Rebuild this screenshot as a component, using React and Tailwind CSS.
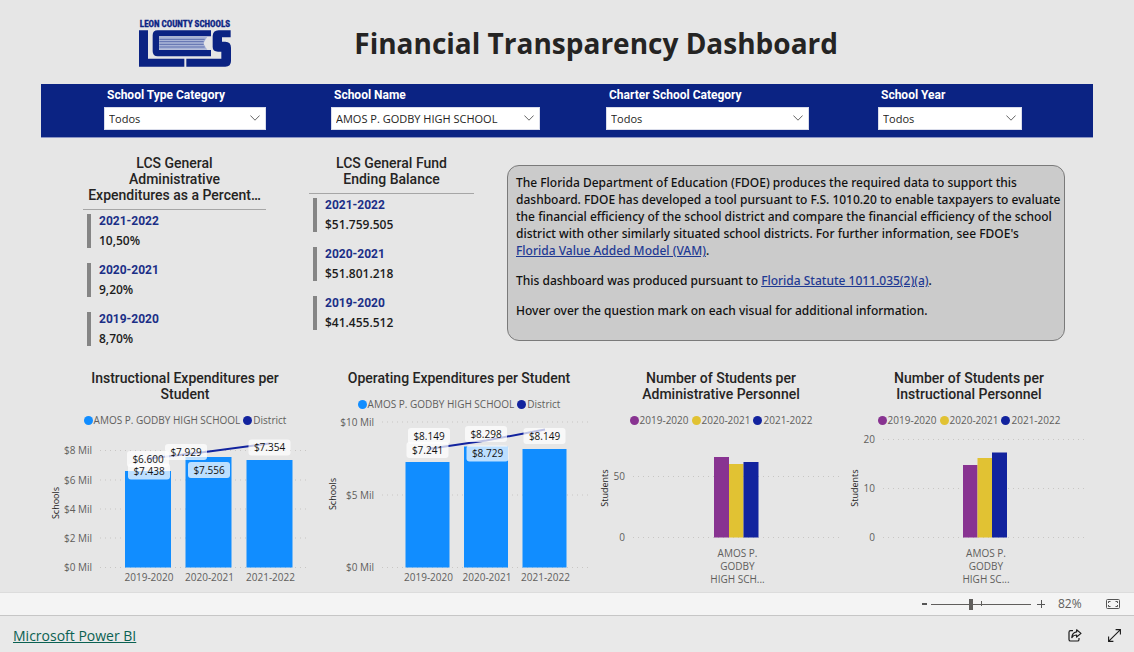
import React from "react";

const SANS = "font-['Open_Sans','Noto_Sans',sans-serif]";
const DIN = "font-['Roboto','Liberation_Sans',sans-serif]";

function Logo() {
  return (
    <svg viewBox="27 25 276 147" className="h-[49px] w-[92px] shrink-0" role="img" aria-label="Leon County Schools">
      <text x="165" y="52" textAnchor="middle" fontSize="27" fontWeight="700" fill="#0b2383" stroke="#0b2383" strokeWidth="1" className="font-['Liberation_Sans_Narrow','Roboto_Condensed','Liberation_Sans',sans-serif]">
        LEON COUNTY SCHOOLS
      </text>
      <g fill="#0b2383">
        <path d="M27 62H54V147H163V171H27Z" />
        <path d="M169 147H274V126H264Q248 126 248 112V80Q248 62 266 62H302V83H276V96H286Q303 96 303 114V154Q303 171 286 171H169Z" />
        <path d="M83 62H243V80H87V121H243V140H83Q68 140 68 125V77Q68 62 83 62Z" />
      </g>
      <path d="M87 81H232Q216 101 232 120H87Z" fill="#a9b4d6" />
      <g stroke="#5d6fae" strokeWidth="3">
        <path d="M88 89H224M88 96H221M88 104H221M88 112H224" />
      </g>
      <path d="M243 81Q200 101 243 120Z" fill="#e6e6e6" />
    </svg>
  );
}

function Filter({ id, label, value, width }) {
  return (
    <div>
      <label htmlFor={id} className={`block pl-[3px] text-[12px] leading-[16px] font-bold text-white ${DIN}`}>
        {label}
      </label>
      <div className={`relative mt-1 max-w-full ${width}`}>
        <select id={id} defaultValue={value} className="block h-[23px] w-full appearance-none border border-[#d9dcea] bg-white pt-px pr-6 pl-1 text-[11px] text-[#252423]">
          <option>{value}</option>
        </select>
        <svg viewBox="0 0 10 6" className="pointer-events-none absolute top-[8px] right-[6px] h-[6px] w-[10px]" fill="none" stroke="#555" strokeWidth="0.9">
          <path d="M0.4 0.5 5 5.2 9.6 0.5" />
        </svg>
      </div>
    </div>
  );
}

function Kpi({ title, items }) {
  return (
    <section>
      <div className="border-b border-[#a6a6a6] pb-[6px]">
        <h2 className={`text-center text-[14px] leading-[16px] font-medium text-[#252423] ${DIN}`}>
          {title.map((line) => (
            <span key={line} className="block whitespace-nowrap">{line}</span>
          ))}
        </h2>
      </div>
      <dl className="mt-1 ml-1 flex flex-col gap-[15px]">
        {items.map(([year, value]) => (
          <div key={year} className="h-[34px] border-l-4 border-[#858585] pl-2">
            <dt className={`text-[12px] leading-[15px] font-bold text-[#1b2f86] ${DIN}`}>{year}</dt>
            <dd className="mt-1 text-[12px] leading-[16px] font-semibold text-[#1c1c1c]">{value}</dd>
          </div>
        ))}
      </dl>
    </section>
  );
}

function ChartCard({ title, legend, children }) {
  return (
    <section className="flex flex-col">
      <h2 className={`text-center text-[14px] leading-[16px] font-medium text-[#252423] ${DIN}`}>
        {title.map((line) => (
          <span key={line} className="block">{line}</span>
        ))}
      </h2>
      <ul className="mt-[10px] flex h-4 items-center justify-center gap-[3px] text-[10px] text-[#605e5c]">
        {legend.map(([name, color]) => (
          <li key={name} className="flex items-center gap-px whitespace-nowrap">
            <span className={`size-[9px] rounded-full ${color}`} />
            {name}
          </li>
        ))}
      </ul>
      {children}
    </section>
  );
}

function Grid({ lines, from, to, tickX }) {
  return (
    <g>
      {lines.map(([label, y]) => (
        <g key={label}>
          <line x1={from} x2={to} y1={y} y2={y} stroke="#c8c6c4" strokeWidth="1" strokeDasharray="1 4" />
          <text x={tickX} y={y + 3.5} textAnchor="end" fontSize="10" fill="#605e5c">{label}</text>
        </g>
      ))}
    </g>
  );
}

function AxisTitle({ x, y, children }) {
  return (
    <text transform={`translate(${x} ${y}) rotate(-90)`} textAnchor="middle" fontSize="9" fill="#252423">
      {children}
    </text>
  );
}

function Tag({ x, y, children }) {
  return (
    <g>
      <rect x={x - 21} y={y - 8} width="42" height="16" rx="3" fill="#fff" fillOpacity="0.72" />
      <text x={x} y={y + 3.5} textAnchor="middle" fontSize="10" fill="#111">{children}</text>
    </g>
  );
}

function ComboChart({ width, height, lines, from, to, tickX, axis, bars, barWidth, base, points, tags }) {
  return (
    <svg viewBox={`0 0 ${width} ${height}`} className="block w-full">
      <AxisTitle x={axis[0]} y={axis[1]}>Schools</AxisTitle>
      <Grid lines={lines} from={from} to={to} tickX={tickX} />
      {bars.map(([year, x, top]) => (
        <g key={year}>
          <rect x={x} y={top} width={barWidth} height={base - top} fill="#118dff" />
          <text x={x + barWidth / 2 + 1} y={base + 13.5} textAnchor="middle" fontSize="10" fill="#605e5c">{year}</text>
        </g>
      ))}
      <polyline points={points} fill="none" stroke="#12239e" strokeWidth="2" strokeLinejoin="round" />
      {tags.map(([text, x, y]) => (
        <Tag key={`${text}-${x}`} x={x} y={y}>{text}</Tag>
      ))}
    </svg>
  );
}

function ClusterChart({ width, lines, from, to, axisX, bars, labelX, label }) {
  const fills = ["#883391", "#e1c233", "#12239e"];
  return (
    <svg viewBox={`0 0 ${width} 164`} className="block w-full">
      <AxisTitle x={axisX} y={60}>Students</AxisTitle>
      <Grid lines={lines} from={from} to={to} tickX={from - 8} />
      {bars.map(([x, top, w], i) => (
        <rect key={x} x={x} y={top} width={w} height={109.5 - top} fill={fills[i]} />
      ))}
      {label.map((line, i) => (
        <text key={line} x={labelX} y={129 + i * 13} textAnchor="middle" fontSize="10" fill="#605e5c">{line}</text>
      ))}
    </svg>
  );
}

const schoolLegend = [
  ["AMOS P. GODBY HIGH SCHOOL", "bg-[#118dff]"],
  ["District", "bg-[#12239e]"],
];
const yearLegend = [
  ["2019-2020", "bg-[#883391]"],
  ["2020-2021", "bg-[#e1c233]"],
  ["2021-2022", "bg-[#12239e]"],
];

export default function App() {
  return (
    <div className={`min-h-screen bg-[#e6e6e6] text-[#252423] ${SANS}`}>
      <header className="flex h-[84px] items-center pr-[296px] pl-[139px]">
        <Logo />
        <h1 className="flex-1 pt-[2px] text-right text-[28px] leading-[40px] font-bold whitespace-nowrap">Financial Transparency Dashboard</h1>
      </header>

      <div className="mx-[41px] grid h-[54px] grid-cols-[227fr_275fr_272fr_215fr] border-b border-[#8c95c4] bg-[#0b2383] pt-[3px] pl-[63px]">
        <Filter id="type" label="School Type Category" value="Todos" width="w-[162px]" />
        <Filter id="name" label="School Name" value="AMOS P. GODBY HIGH SCHOOL" width="w-[209px]" />
        <Filter id="charter" label="Charter School Category" value="Todos" width="w-[203px]" />
        <Filter id="year" label="School Year" value="Todos" width="w-[144px]" />
      </div>

      <div className="grid grid-cols-[183fr_43fr_165fr_33fr_558fr] items-start pr-[69px] pl-[83px]">
        <div className="pt-[17px]">
          <Kpi
            title={["LCS General", "Administrative", "Expenditures as a Percent…"]}
            items={[["2021-2022", "10,50%"], ["2020-2021", "9,20%"], ["2019-2020", "8,70%"]]}
          />
        </div>
        <div className="col-start-3 pt-[17px]">
          <Kpi
            title={["LCS General Fund", "Ending Balance"]}
            items={[["2021-2022", "$51.759.505"], ["2020-2021", "$51.801.218"], ["2019-2020", "$41.455.512"]]}
          />
        </div>
        <div className="col-start-5 mt-[27px] flex min-h-[176px] flex-col gap-[13px] rounded-xl border border-[#7a7a7a] bg-[#cbcbcb] pt-2 pl-2 font-['Noto_Sans','Open_Sans',sans-serif] text-[12px] leading-[17px] font-medium text-[#111]">
          <p>
            The Florida Department of Education (FDOE) produces the required data to support this dashboard. FDOE has developed a tool pursuant to F.S. 1010.20 to enable taxpayers to evaluate the financial efficiency of the school district and compare the financial efficiency of the school district with other similarly situated school districts. For further information, see FDOE's
            <br />
            <a href="#vam" className="text-[#1f3a93] underline">Florida Value Added Model (VAM)</a>.
          </p>
          <p>
            This dashboard was produced pursuant to <a href="#statute" className="text-[#1f3a93] underline">Florida Statute 1011.035(2)(a)</a>.
          </p>
          <p>Hover over the question mark on each visual for additional information.</p>
        </div>
      </div>

      <div className="mt-[24px] grid grid-cols-[278fr_270fr_254fr_242fr] pr-[44px] pl-[46px]">
        <ChartCard title={["Instructional Expenditures per", "Student"]} legend={schoolLegend}>
          <ComboChart
            width={278} height={164} from={54} to={262} tickX={46} axis={[13, 75]} base={139.5} barWidth={46}
            lines={[["$8 Mil", 22.5], ["$6 Mil", 52], ["$4 Mil", 81], ["$2 Mil", 110], ["$0 Mil", 139.5]]}
            bars={[["2019-2020", 79, 43], ["2020-2021", 139.5, 29], ["2021-2022", 200.5, 32]]}
            points="102,30.7 163,23.5 224,15.5"
            tags={[["$6.600", 102, 31], ["$7.438", 103, 43.5], ["$7.929", 140, 24], ["$7.556", 163, 42], ["$7.354", 223.5, 19.5]]}
          />
        </ChartCard>
        <ChartCard title={["Operating Expenditures per Student"]} legend={schoolLegend}>
          <ComboChart
            width={270} height={180} from={58} to={266} tickX={50} axis={[12, 82]} base={155.5} barWidth={44}
            lines={[["$10 Mil", 10], ["$5 Mil", 83], ["$0 Mil", 155.5]]}
            bars={[["2019-2020", 81.5, 50], ["2020-2021", 140, 34.5], ["2021-2022", 198.5, 37]]}
            points="104,37 162,28.5 221,17.5"
            tags={[["$8.149", 105, 24], ["$7.241", 103.5, 38], ["$8.298", 162, 22], ["$8.729", 163.5, 41.5], ["$8.149", 220.5, 24]]}
          />
        </ChartCard>
        <ChartCard title={["Number of Students per", "Administrative Personnel"]} legend={yearLegend}>
          <ClusterChart
            width={254} from={39} to={248} axisX={14} labelX={143.5} label={["AMOS P.", "GODBY", "HIGH SCH..."]}
            lines={[["50", 48.5], ["0", 109.5]]}
            bars={[[120, 29, 15], [135, 36, 14.5], [149.5, 34, 15]]}
          />
        </ChartCard>
        <ChartCard title={["Number of Students per", "Instructional Personnel"]} legend={yearLegend}>
          <ClusterChart
            width={242} from={35} to={240} axisX={10} labelX={138} label={["AMOS P.", "GODBY", "HIGH SC..."]}
            lines={[["20", 11.5], ["10", 60.5], ["0", 109.5]]}
            bars={[[115, 37, 14.5], [129.5, 30, 14.5], [144, 24.5, 15]]}
          />
        </ChartCard>
      </div>

      <div className="flex h-6 items-center justify-end border-t border-b border-t-[#dcdcdc] border-b-[#c6c6c6] bg-[#f4f4f4] pr-[14px] text-[12px] text-[#605e5c]">
        <button aria-label="Zoom out" className="flex h-5 w-[14px] items-center justify-center">
          <svg viewBox="0 0 5 2" className="h-[2px] w-[5px]"><path d="M0 0H5V2H0Z" fill="#555" /></svg>
        </button>
        <div className="relative flex h-5 w-[100px] items-center">
          <span className="absolute top-[7px] left-[50px] h-[5px] w-px bg-[#605e5c]" />
          <input
            type="range"
            aria-label="Zoom"
            min="0"
            max="100"
            defaultValue="40"
            className="relative h-5 w-full appearance-none bg-transparent [&::-webkit-slider-runnable-track]:h-px [&::-webkit-slider-runnable-track]:bg-[#605e5c] [&::-webkit-slider-thumb]:-mt-[5px] [&::-webkit-slider-thumb]:h-[11px] [&::-webkit-slider-thumb]:w-1 [&::-webkit-slider-thumb]:appearance-none [&::-webkit-slider-thumb]:bg-[#605e5c]"
          />
        </div>
        <button aria-label="Zoom in" className="flex h-5 w-[20px] items-center justify-center">
          <svg viewBox="0 0 8 8" className="size-2" stroke="#555" fill="none"><path d="M0 4.5H8M4.5 0V8" /></svg>
        </button>
        <span className="ml-[7px] w-[23px] text-[12px] whitespace-nowrap">82%</span>
        <button aria-label="Fit to page" className="ml-[25px]">
          <svg viewBox="0 0 14 10" className="h-[10px] w-[14px]" fill="none" stroke="#555">
            <rect x="0.5" y="0.5" width="13" height="9" rx="1" />
            <path d="M2.5 4V2.5H4.5M9.5 2.5H11.5V4M11.5 6V7.5H9.5M4.5 7.5H2.5V6" />
          </svg>
        </button>
      </div>

      <footer className="flex h-9 items-center bg-[#e9e9e9] pt-[3px] pr-[13px] pl-[13px]">
        <a href="#powerbi" className="text-[14px] leading-[20px] text-[#0b6152] underline">Microsoft Power BI</a>
        <button aria-label="Share" className="ml-auto">
          <svg viewBox="0 0 14 13" className="h-[13px] w-[14px]" fill="none" stroke="#1b1b1b" strokeWidth="1.2" strokeLinejoin="round">
            <path d="M5 1.6H2.6Q1 1.6 1 3.2V10.4Q1 12 2.6 12H9.4Q11 12 11 10.4V9" />
            <path d="M8.6 0.8 13 4.4 8.6 8V6Q5.6 5.8 3.8 8.6Q4.2 3.6 8.6 2.9Z" />
          </svg>
        </button>
        <button aria-label="Full screen" className="ml-[26px]">
          <svg viewBox="0 0 13 13" className="size-[13px]" fill="none" stroke="#1b1b1b" strokeWidth="1.1">
            <path d="M0.8 12.2 12.2 0.8M7.6 0.6H12.4V5.4M0.6 7.6V12.4H5.4" />
          </svg>
        </button>
      </footer>
    </div>
  );
}
